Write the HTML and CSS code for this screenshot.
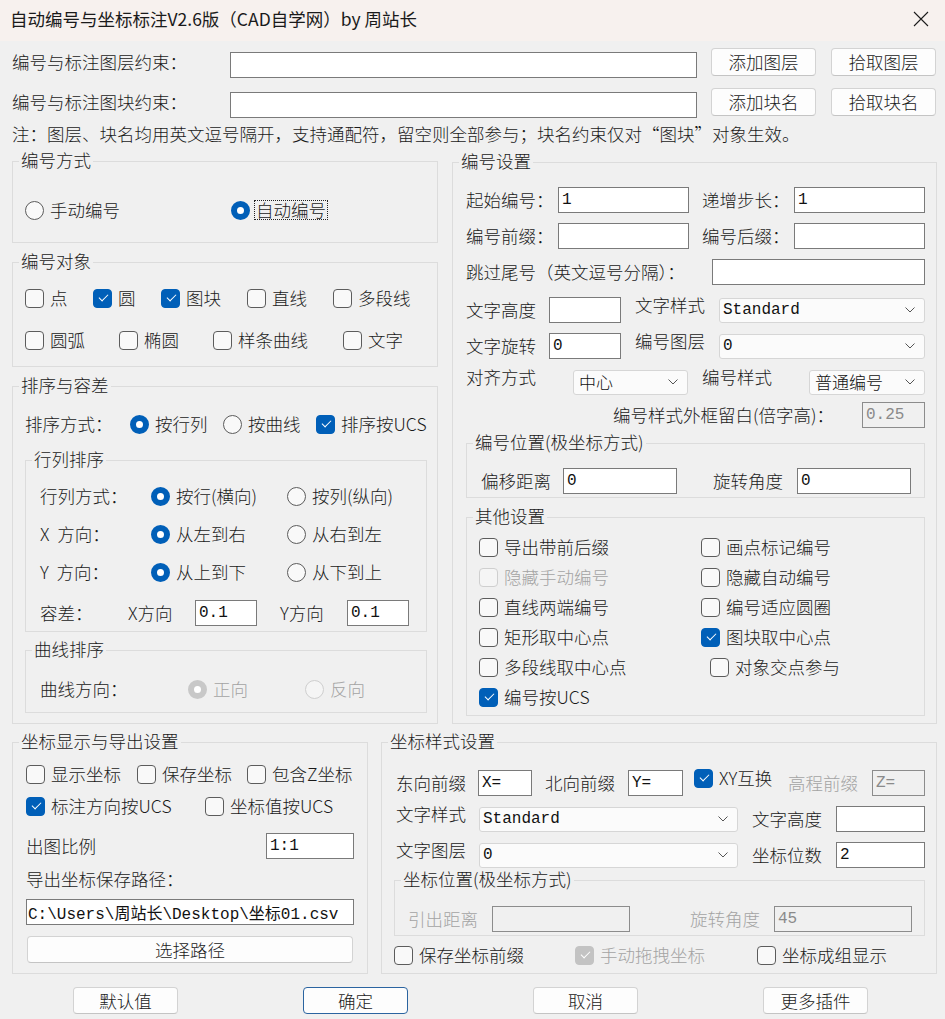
FILE: index.html
```html
<!DOCTYPE html>
<html lang="zh-CN">
<head>
    <meta charset="UTF-8">
    <title>自动编号与坐标标注V2.6版</title>
    <link rel="stylesheet" href="styles.css">
</head>
<body>
<div class="window">
    <div class="titlebar">
        <span class="title">自动编号与坐标标注V2.6版（CAD自学网）by 周站长</span>
        <span class="close">
            <svg width="16" height="16" viewBox="0 0 16 16"><path d="M1 1L15 15M15 1L1 15" stroke="#1c1c1c" stroke-width="1.1" fill="none"/></svg>
        </span>
    </div>

    <div class="content">
        <!-- 图层 / 图块约束 -->
        <div class="filter-row">
            <span class="filter-label">编号与标注图层约束：</span>
            <input class="edit filter-edit" type="text">
            <button class="btn filter-btn">添加图层</button>
            <button class="btn filter-btn">拾取图层</button>
        </div>
        <div class="filter-row">
            <span class="filter-label">编号与标注图块约束：</span>
            <input class="edit filter-edit" type="text">
            <button class="btn filter-btn">添加块名</button>
            <button class="btn filter-btn">拾取块名</button>
        </div>
        <div class="note">注：图层、块名均用英文逗号隔开，支持通配符，留空则全部参与；块名约束仅对“图块”对象生效。</div>

        <div class="main">
            <div class="col">
                <div class="group g-mode">
                    <div class="legend">编号方式</div>
                    <div class="row mode-row">
                        <span class="opt"><i class="radio"></i>手动编号</span>
                        <span class="opt focused"><i class="radio on"></i><span class="focus-ring">自动编号</span></span>
                    </div>
                </div>

                <div class="group g-objects">
                    <div class="legend">编号对象</div>
                    <div class="row obj-row1">
                        <span class="opt"><i class="box"></i>点</span>
                        <span class="opt"><i class="box on"></i>圆</span>
                        <span class="opt"><i class="box on"></i>图块</span>
                        <span class="opt"><i class="box"></i>直线</span>
                        <span class="opt"><i class="box"></i>多段线</span>
                    </div>
                    <div class="row obj-row2">
                        <span class="opt"><i class="box"></i>圆弧</span>
                        <span class="opt"><i class="box"></i>椭圆</span>
                        <span class="opt"><i class="box"></i>样条曲线</span>
                        <span class="opt"><i class="box"></i>文字</span>
                    </div>
                </div>

                <div class="group g-sort">
                    <div class="legend">排序与容差</div>
                    <div class="row sort-row">
                        <span>排序方式：</span>
                        <span class="opt"><i class="radio on"></i>按行列</span>
                        <span class="opt"><i class="radio"></i>按曲线</span>
                        <span class="opt"><i class="box on"></i>排序按UCS</span>
                    </div>

                    <div class="group p14 g-rowcol">
                        <div class="legend">行列排序</div>
                        <div class="row rc-row first">
                            <span>行列方式：</span>
                            <span class="opt"><i class="radio on"></i>按行(横向)</span>
                            <span class="opt"><i class="radio"></i>按列(纵向)</span>
                        </div>
                        <div class="row rc-row">
                            <span>X&nbsp; 方向：</span>
                            <span class="opt"><i class="radio on"></i>从左到右</span>
                            <span class="opt"><i class="radio"></i>从右到左</span>
                        </div>
                        <div class="row rc-row">
                            <span>Y&nbsp; 方向：</span>
                            <span class="opt"><i class="radio on"></i>从上到下</span>
                            <span class="opt"><i class="radio"></i>从下到上</span>
                        </div>
                        <div class="row tol-row">
                            <span>容差：</span>
                            <span>X方向</span>
                            <input class="edit tol" type="text" value="0.1">
                            <span>Y方向</span>
                            <input class="edit tol" type="text" value="0.1">
                        </div>
                    </div>

                    <div class="group p14 g-curve">
                        <div class="legend">曲线排序</div>
                        <div class="row curve-row">
                            <span>曲线方向：</span>
                            <span class="opt off"><i class="radio on"></i>正向</span>
                            <span class="opt off"><i class="radio"></i>反向</span>
                        </div>
                    </div>
                </div>
            </div>

            <div class="group p13 g-num">
                <div class="legend">编号设置</div>
                <div class="row num-row first">
                    <span>起始编号：</span><input class="edit w131" type="text" value="1">
                    <span>递增步长：</span><input class="edit w131" type="text" value="1">
                </div>
                <div class="row num-row">
                    <span>编号前缀：</span><input class="edit w131" type="text">
                    <span>编号后缀：</span><input class="edit w131" type="text">
                </div>
                <div class="row skip-row">
                    <span>跳过尾号（英文逗号分隔）：</span><input class="edit w213" type="text">
                </div>
                <div class="row text-row">
                    <span>文字高度</span><input class="edit w72" type="text">
                    <span class="lift">文字样式</span>
                    <div class="combo w206">Standard<svg class="chev" width="10" height="6" viewBox="0 0 10 6"><path d="M0.5 0.5L5 5L9.5 0.5"/></svg></div>
                </div>
                <div class="row text-row">
                    <span>文字旋转</span><input class="edit w72" type="text" value="0">
                    <span class="lift">编号图层</span>
                    <div class="combo w206">0<svg class="chev" width="10" height="6" viewBox="0 0 10 6"><path d="M0.5 0.5L5 5L9.5 0.5"/></svg></div>
                </div>
                <div class="row align-row">
                    <span class="lift">对齐方式</span>
                    <div class="combo w115 cjk">中心<svg class="chev" width="10" height="6" viewBox="0 0 10 6"><path d="M0.5 0.5L5 5L9.5 0.5"/></svg></div>
                    <span class="lift">编号样式</span>
                    <div class="combo w116 cjk">普通编号<svg class="chev" width="10" height="6" viewBox="0 0 10 6"><path d="M0.5 0.5L5 5L9.5 0.5"/></svg></div>
                </div>
                <div class="row margin-row">
                    <span class="margin-label">编号样式外框留白(倍字高)：</span><input class="edit w63" type="text" value="0.25" disabled>
                </div>

                <div class="group p14 g-offset">
                    <div class="legend">编号位置(极坐标方式)</div>
                    <div class="row offset-row">
                        <span>偏移距离</span><input class="edit w114" type="text" value="0">
                        <span>旋转角度</span><input class="edit w114" type="text" value="0">
                    </div>
                </div>

                <div class="group g-other">
                    <div class="legend">其他设置</div>
                    <div class="row other-row first">
                        <span class="opt"><i class="box"></i>导出带前后缀</span>
                        <span class="opt"><i class="box"></i>画点标记编号</span>
                    </div>
                    <div class="row other-row">
                        <span class="opt off"><i class="box"></i>隐藏手动编号</span>
                        <span class="opt"><i class="box"></i>隐藏自动编号</span>
                    </div>
                    <div class="row other-row">
                        <span class="opt"><i class="box"></i>直线两端编号</span>
                        <span class="opt"><i class="box"></i>编号适应圆圈</span>
                    </div>
                    <div class="row other-row">
                        <span class="opt"><i class="box"></i>矩形取中心点</span>
                        <span class="opt"><i class="box on"></i>图块取中心点</span>
                    </div>
                    <div class="row other-row">
                        <span class="opt"><i class="box"></i>多段线取中心点</span>
                        <span class="opt nudge"><i class="box"></i>对象交点参与</span>
                    </div>
                    <div class="row other-row">
                        <span class="opt"><i class="box on"></i>编号按UCS</span>
                    </div>
                </div>
            </div>
        </div>

        <div class="bottom">
            <div class="group p13 g-export">
                <div class="legend">坐标显示与导出设置</div>
                <div class="row exp-row1">
                    <span class="opt"><i class="box"></i>显示坐标</span>
                    <span class="opt"><i class="box"></i>保存坐标</span>
                    <span class="opt"><i class="box"></i>包含Z坐标</span>
                </div>
                <div class="row exp-row2">
                    <span class="opt"><i class="box on"></i>标注方向按UCS</span>
                    <span class="opt"><i class="box"></i>坐标值按UCS</span>
                </div>
                <div class="row scale-row">
                    <span>出图比例</span><input class="edit w88" type="text" value="1:1">
                </div>
                <div class="path-label">导出坐标保存路径：</div>
                <input class="edit path-edit" type="text" value="C:\Users\周站长\Desktop\坐标01.csv">
                <button class="btn path-btn">选择路径</button>
            </div>

            <div class="group p14 g-coord">
                <div class="legend">坐标样式设置</div>
                <div class="row coord-row first">
                    <span>东向前缀</span><input class="edit w54" type="text" value="X=">
                    <span>北向前缀</span><input class="edit w55" type="text" value="Y=">
                    <span class="opt lift"><i class="box on"></i>XY互换</span>
                    <span class="muted">高程前缀</span><input class="edit w53" type="text" value="Z=" disabled>
                </div>
                <div class="row style-row">
                    <span class="lift">文字样式</span>
                    <div class="combo w259">Standard<svg class="chev" width="10" height="6" viewBox="0 0 10 6"><path d="M0.5 0.5L5 5L9.5 0.5"/></svg></div>
                    <span>文字高度</span><input class="edit w89" type="text">
                </div>
                <div class="row style-row">
                    <span class="lift">文字图层</span>
                    <div class="combo w259">0<svg class="chev" width="10" height="6" viewBox="0 0 10 6"><path d="M0.5 0.5L5 5L9.5 0.5"/></svg></div>
                    <span>坐标位数</span><input class="edit w89" type="text" value="2">
                </div>

                <div class="group p13 g-pos">
                    <div class="legend">坐标位置(极坐标方式)</div>
                    <div class="row pos-row">
                        <span class="muted">引出距离</span><input class="edit w138" type="text" disabled>
                        <span class="muted">旋转角度</span><input class="edit w138" type="text" value="45" disabled>
                    </div>
                </div>

                <div class="row save-row">
                    <span class="opt"><i class="box"></i>保存坐标前缀</span>
                    <span class="opt off"><i class="box on"></i>手动拖拽坐标</span>
                    <span class="opt"><i class="box"></i>坐标成组显示</span>
                </div>
            </div>
        </div>

        <div class="footer">
            <button class="btn">默认值</button>
            <button class="btn default">确定</button>
            <button class="btn">取消</button>
            <button class="btn">更多插件</button>
        </div>
    </div>
</div>
</body>
</html>
```

FILE: styles.css
```css
* {
    box-sizing: border-box;
}

body {
    margin: 0;
    background: #f0f0f0;
    font-family: "Noto Sans CJK SC", sans-serif;
    font-size: 17.5px;
    font-weight: 300;
    line-height: 20px;
    color: #1a1a1a;
}

.window {
    width: 945px;
    height: 1019px;
    overflow: hidden;
}

/* 标题栏 */
.titlebar {
    height: 41px;
    display: flex;
    align-items: center;
    justify-content: space-between;
    padding: 0 1px 3px 10px;
    background: #f7f1ee;
    font-weight: 400;
}

.close {
    display: flex;
    align-items: center;
    justify-content: center;
    width: 46px;
    height: 38px;
}

.content {
    padding: 7px 8px 0 12px;
}

/* 基本控件 */
.edit {
    height: 26px;
    padding: 0 3px;
    border: 1px solid #7a7a7a;
    border-radius: 0;
    background: #fff;
    font-family: "Liberation Mono", "Noto Sans CJK SC", monospace;
    font-size: 16px;
    color: #111;
    outline: none;
}

.edit:disabled {
    background: #f0f0f0;
    border-color: #8c8c8c;
    color: #8a8a8a;
}

.btn {
    height: 28px;
    padding: 0;
    border: 1px solid #d3d3d3;
    border-bottom-color: #c4c4c4;
    border-radius: 4px;
    background: #fdfdfd;
    font: inherit;
    color: #1a1a1a;
}

.btn.default {
    border-color: #2b64a0;
}

.combo {
    display: flex;
    align-items: center;
    justify-content: space-between;
    height: 25px;
    padding: 0 9px 0 3px;
    border: 1px solid #d6d6d6;
    border-radius: 3px;
    background: #fbfbfb;
    font-family: "Liberation Mono", "Noto Sans CJK SC", monospace;
    font-size: 16px;
    color: #111;
}

.combo.cjk {
    font-family: "Noto Sans CJK SC", sans-serif;
    font-size: 17px;
    padding-left: 5px;
}

.chev {
    fill: none;
    stroke: #555;
    stroke-width: 1;
}

.opt {
    display: flex;
    align-items: center;
    gap: 6px;
    white-space: nowrap;
}

.opt.off,
.muted {
    color: #a3a3a3;
}

.box,
.radio {
    position: relative;
    flex: none;
    width: 19px;
    height: 19px;
    border: 1px solid #5c5c5c;
    background: #f9f9f9;
}

.box {
    border-radius: 4px;
}

.box.on {
    background: #005fb8;
    border-color: #005fb8;
}

.box.on::after {
    content: "";
    position: absolute;
    left: 4.5px;
    top: 4.5px;
    width: 8px;
    height: 4px;
    border-left: 1.3px solid #fff;
    border-bottom: 1.3px solid #fff;
    transform: rotate(-45deg);
}

.radio {
    border-radius: 50%;
}

.radio.on {
    border: 6px solid #005fb8;
    background: #fff;
}

.opt.off .box,
.opt.off .radio {
    border-color: #cfcfcf;
    background: #f5f5f5;
}

.opt.off .box.on {
    border-color: #c3c3c3;
    background: #c3c3c3;
}

.opt.off .radio.on {
    border-color: #c8c8c8;
    background: #fff;
}

.opt.focused {
    gap: 4px;
}

.focus-ring {
    border: 1px dotted #222;
    padding: 0 1px;
    line-height: 18px;
}

/* 分组框 */
.group {
    border: 1px solid #dcdcdc;
    padding-left: 12px;
}

.legend {
    width: max-content;
    height: 20px;
    margin: -12px 0 0 -6px;
    padding: 0 2px;
    background: #f0f0f0;
}

.group.p13 {
    padding-left: 13px;
}

.group.p13 > .legend {
    margin-left: -7px;
}

.group.p14 {
    padding-left: 14px;
}

.group.p14 > .legend {
    margin-left: -8px;
}

.row {
    display: grid;
    align-items: center;
    height: 26px;
    white-space: nowrap;
}

.lift {
    margin-bottom: 10px;
}

/* 顶部约束 */
.filter-row {
    display: flex;
    align-items: flex-start;
    height: 28px;
}

.filter-row + .filter-row {
    margin-top: 12px;
}

.filter-label {
    width: 218px;
    line-height: 28px;
}

.filter-edit {
    width: 467px;
    margin-top: 4px;
}

.filter-btn {
    width: 105px;
    margin-left: 14px;
}

.filter-btn + .filter-btn {
    margin-left: 15px;
}

.note {
    margin-top: 8px;
}

/* 主体两栏 */
.main {
    display: grid;
    grid-template-columns: 426px 485px;
    column-gap: 14px;
    align-items: start;
    margin-top: 17px;
}

.col {
    display: flex;
    flex-direction: column;
    gap: 19px;
}

.g-mode {
    height: 82px;
}

.mode-row {
    grid-template-columns: 206px auto;
    margin-top: 27px;
}

.g-objects {
    height: 105px;
}

.obj-row1 {
    grid-template-columns: 68px 68px 86px 86px auto;
    margin-top: 14px;
}

.obj-row2 {
    grid-template-columns: 94px 94px 130px auto;
    margin-top: 16px;
}

.g-sort {
    height: 338px;
}

.sort-row {
    grid-template-columns: 105px 93px 93px auto;
    margin-top: 16px;
}

.g-rowcol {
    width: 402px;
    height: 172px;
    margin-top: 23px;
}

.rc-row {
    grid-template-columns: 111px 136px auto;
    margin-top: 12px;
}

.rc-row.first {
    margin-top: 14px;
}

.tol-row {
    grid-template-columns: 88px 67px 85px 67px auto;
    margin-top: 15px;
}

.tol {
    width: 62px;
}

.g-curve {
    width: 402px;
    height: 63px;
    margin-top: 18px;
}

.curve-row {
    grid-template-columns: 148px 117px auto;
    margin-top: 17px;
}

/* 编号设置 */
.g-num {
    height: 562px;
    margin-top: 1px;
}

.g-num > .row {
    margin-top: 10px;
}

.g-num > .row.first {
    margin-top: 16px;
}

.num-row {
    grid-template-columns: 92px 144px 92px auto;
}

.skip-row {
    grid-template-columns: 246px auto;
}

.text-row {
    grid-template-columns: 83px 86px 84px auto;
}

.align-row {
    grid-template-columns: 107px 129px 107px auto;
}

.g-num > .margin-row {
    grid-template-columns: 396px auto;
    margin-top: 9px;
}

.margin-label {
    padding-left: 147px;
}

.g-offset {
    width: 459px;
    height: 55px;
    margin-top: 15px;
}

.offset-row {
    grid-template-columns: 82px 150px 84px auto;
    margin-top: 16px;
}

.g-other {
    width: 459px;
    height: 199px;
    margin-top: 19px;
}

.other-row {
    grid-template-columns: 222px auto;
    height: 30px;
}

.other-row.first {
    margin-top: 6px;
}

.nudge {
    margin-left: 9px;
}

.w53 { width: 53px; }
.w54 { width: 54px; }
.w55 { width: 55px; }
.w63 { width: 63px; }
.w72 { width: 72px; }
.w88 { width: 88px; }
.w89 { width: 89px; }
.w114 { width: 114px; }
.w115 { width: 115px; }
.w116 { width: 116px; }
.w131 { width: 131px; }
.w138 { width: 138px; }
.w206 { width: 206px; }
.w213 { width: 213px; }
.w259 { width: 259px; }

/* 坐标部分 */
.bottom {
    display: grid;
    grid-template-columns: 356px 556px;
    column-gap: 13px;
    margin-top: 18px;
}

.g-export,
.g-coord {
    height: 232px;
}

.exp-row1 {
    grid-template-columns: 111px 110px auto;
    margin-top: 10px;
}

.exp-row2 {
    grid-template-columns: 179px auto;
    margin-top: 6px;
}

.scale-row {
    grid-template-columns: 240px auto;
    margin-top: 14px;
}

.path-label {
    margin-top: 10px;
}

.path-edit {
    display: block;
    width: 328px;
    margin-top: 10px;
    padding-left: 1px;
}

.path-btn {
    display: block;
    width: 326px;
    height: 27px;
    margin: 11px 0 0 1px;
}

.g-coord > .row {
    margin-top: 10px;
}

.g-coord > .row.first {
    margin-top: 17px;
}

.coord-row {
    grid-template-columns: 82px 67px 83px 66px 94px 84px auto;
}

.style-row {
    grid-template-columns: 83px 273px 84px auto;
}

.g-pos {
    width: 531px;
    height: 56px;
    margin: 14px 0 0 -2px;
}

.pos-row {
    grid-template-columns: 84px 198px 84px auto;
    margin-top: 17px;
}

.g-coord > .save-row {
    grid-template-columns: 181px 182px auto;
    margin: 6px 0 0 -2px;
}

/* 底部按钮 */
.footer {
    display: flex;
    gap: 125px;
    margin-top: 13px;
    padding-left: 61px;
}

.footer .btn {
    width: 105px;
    height: 27px;
}
```
